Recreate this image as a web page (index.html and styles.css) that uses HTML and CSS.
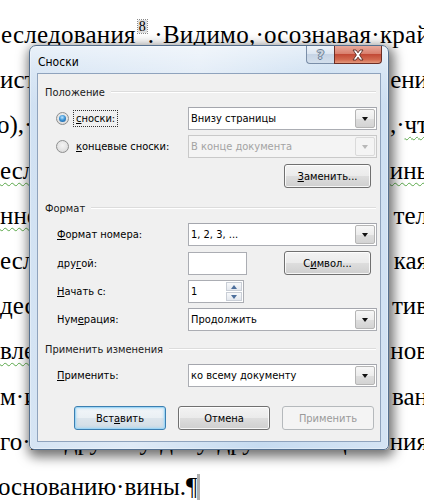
FILE: index.html
```html
<!DOCTYPE html>
<html lang="ru">
<head>
<meta charset="utf-8">
<title>Сноски</title>
<link rel="stylesheet" href="styles.css">
</head>
<body>
<div class="doc">
  <div class="line first">еследования<span class="fnref">8</span>.·Видимо,·осознавая·край</div>
  <div class="line"><span class="l">ист</span><span class="r">ени</span></div>
  <div class="line"><span class="l sh">о),·</span><span class="r">,·<span class="gw">чт</span></span></div>
  <div class="line"><span class="l"><span class="gw">есл</span></span><span class="r"><span class="gw">инь</span></span></div>
  <div class="line"><span class="l"><span class="gw">нне</span></span><span class="r">тел</span></div>
  <div class="line"><span class="l">есл</span><span class="r">кая</span></div>
  <div class="line"><span class="l">дест</span><span class="r">тив</span></div>
  <div class="line"><span class="l"><span class="gw">вле</span></span><span class="r">нов</span></div>
  <div class="line"><span class="l">м·и</span><span class="r">ван</span></div>
  <div class="line"><span class="l">го·по·другому·делу·другого·лица</span><span class="r">ния</span></div>
  <div class="line last">основанию·вины.<span class="pil">¶</span><span class="cursor"></span></div>
</div>

<div class="dialog">
  <div class="titlebar">
    <span class="title">Сноски</span>
    <div class="caption">
      <span class="cap-help">?</span>
      <span class="cap-close">
        <svg width="14" height="12" viewBox="0 0 14 12"><path d="M2 1 L5 1 L7 3.8 L9 1 L12 1 L8.6 6 L12 11 L9 11 L7 8.2 L5 11 L2 11 L5.4 6 Z" fill="#fff" stroke="#5a2a22" stroke-width="0.9" stroke-linejoin="round"/></svg>
      </span>
    </div>
  </div>
  <div class="panel">
    <div class="group">Положение</div>

    <div class="row row-a">
      <div class="radio"><span class="rb on"></span><span class="focus"><u>с</u>носки:</span></div>
      <div class="combo"><span class="val">Внизу страницы</span><span class="drop"></span></div>
    </div>
    <div class="row row-b">
      <div class="radio"><span class="rb"></span><span class="rlabel"><u>к</u>онцевые сноски:</span></div>
      <div class="combo off"><span class="val">В конце документа</span><span class="drop"></span></div>
    </div>
    <div class="row row-c">
      <div></div>
      <div class="ctl-right"><span class="btn"><u>З</u>аменить...</span></div>
    </div>

    <div class="group g2">Формат</div>

    <div class="row row-d">
      <div class="lbl"><u>Ф</u>ормат номера:</div>
      <div class="combo"><span class="val">1, 2, 3, ...</span><span class="drop"></span></div>
    </div>
    <div class="row row-e">
      <div class="lbl">дру<u>г</u>ой:</div>
      <div class="ctl-split">
        <span class="text-box"></span>
        <span class="btn">С<u>и</u>мвол...</span>
      </div>
    </div>
    <div class="row row-f">
      <div class="lbl"><u>Н</u>ачать с:</div>
      <div class="ctl-left">
        <div class="spin"><span class="val">1</span><span class="spin-btns"><span class="up"></span><span class="down"></span></span></div>
      </div>
    </div>
    <div class="row row-g">
      <div class="lbl">Нум<u>е</u>рация:</div>
      <div class="combo"><span class="val">Продолжить</span><span class="drop"></span></div>
    </div>

    <div class="group g3">Применить изменения</div>

    <div class="row row-h">
      <div class="lbl"><u>П</u>рименить:</div>
      <div class="combo"><span class="val">ко всему документу</span><span class="drop"></span></div>
    </div>

    <div class="actions">
      <span class="btn big default">Вст<u>а</u>вить</span>
      <span class="btn big">Отмена</span>
      <span class="btn big disabled">Применить</span>
    </div>
  </div>
</div>
</body>
</html>
```

FILE: styles.css
```css
html, body {
  margin: 0;
  padding: 0;
  background: #fff;
  overflow: hidden;
  width: 424px;
  height: 500px;
}

/* ---------- document behind the dialog ---------- */
.doc {
  position: relative;
  padding-top: 12px;
  font-family: "Liberation Serif", "Times New Roman", serif;
  font-size: 25px;
  line-height: 45.2px;
  color: #000;
}
.line {
  display: flex;
  justify-content: space-between;
  white-space: nowrap;
  overflow: hidden;
  width: 424px;
}
.line.first, .line.last {
  display: block;
}
.line.first { padding-left: 1px; width: 423px; letter-spacing: 0.25px; }
.line.last { margin-left: -2px; width: 426px; }
.l.sh { margin-left: -3px; }
.r { margin-right: -4px; }
.gw {
  text-decoration: underline wavy #5aa84a;
  text-decoration-thickness: 1px;
  text-underline-offset: 3px;
}
.fnref {
  display: inline-block;
  font-size: 14px;
  line-height: 13px;
  vertical-align: 12px;
  padding: 0 1px;
  background: #dedede;
  outline: 1px dotted #8a8a8a;
  margin: 0 1px 0 2px;
  letter-spacing: 0;
}
.cursor {
  display: inline-block;
  width: 3px;
  height: 26px;
  background: #b0b0b0;
  vertical-align: -5px;
  margin-left: 0;
}

/* ---------- dialog window ---------- */
.dialog {
  position: absolute;
  left: 29px;
  top: 45px;
  width: 360px;
  height: 405px;
  box-sizing: border-box;
  border: 1px solid #55708f;
  border-radius: 7px 7px 5px 5px;
  background:
    linear-gradient(180deg, rgba(255,255,255,0.55) 0px, rgba(255,255,255,0.2) 28px, rgba(255,255,255,0) 60px),
    linear-gradient(100deg, #cfe0f2 0%, #dfeaf6 40%, #c6dbf0 70%, #d5e4f4 100%);
  box-shadow: 0 0 0 1px rgba(255,255,255,0.35) inset, 2px 4px 12px 3px rgba(0,0,0,0.55);
  padding: 0 7px 7px 7px;
  display: flex;
  flex-direction: column;
  font-family: "DejaVu Sans Condensed", "DejaVu Sans", sans-serif;
  font-size: 11px;
  color: #000;
}
.titlebar {
  height: 27px;
  display: flex;
  align-items: flex-start;
  justify-content: space-between;
  flex-shrink: 0;
}
.title {
  font-size: 12px;
  margin-top: 9px;
  margin-left: 1px;
  color: #000;
}
.caption {
  display: flex;
  margin-right: -1px;
}
.cap-help, .cap-close {
  height: 18px;
  box-sizing: border-box;
  display: flex;
  align-items: center;
  justify-content: center;
}
.cap-help {
  width: 28px;
  border: 1px solid #7a8ea8;
  border-top: none;
  border-right: none;
  border-radius: 0 0 0 4px;
  background: linear-gradient(180deg, #eef3f9 0%, #dde7f2 45%, #c6d4e5 50%, #d3dfec 100%);
  color: #c9d3de;
  font-family: "DejaVu Sans", sans-serif;
  font-weight: bold;
  font-size: 13px;
  text-shadow: -1px 0 0 #6d7f95, 1px 0 0 #6d7f95, 0 -1px 0 #6d7f95, 0 1px 0 #6d7f95;
}
.cap-close {
  width: 48px;
  border: 1px solid #6b2e25;
  border-top: none;
  border-radius: 0 0 4px 0;
  background: linear-gradient(180deg, #e9a99b 0%, #d9806e 45%, #c24a36 50%, #d2694f 80%, #e49a7d 100%);
}

.panel {
  flex: 1;
  box-sizing: border-box;
  border: 1px solid #8fa3bd;
  background: #f0f0f0;
  padding: 10px 4px 0 7px;
  display: flex;
  flex-direction: column;
}

.group {
  height: 16px;
  display: flex;
  align-items: center;
  gap: 6px;
  color: #1a1a1a;
}
.group::after {
  content: "";
  flex: 1;
  height: 1px;
  background: #dcdcdc;
  border-bottom: 1px solid #fff;
}
.g2 { margin-top: 12px; }
.g3 { margin-top: 10px; }

.row {
  display: grid;
  grid-template-columns: 132px 189px;
  margin-left: 11px;
  align-items: center;
  height: 23px;
}
.row-a { margin-top: 7px; }
.row-b { margin-top: 5px; }
.row-c { margin-top: 6px; height: 24px; }
.row-d { margin-top: 7px; }
.row-e { margin-top: 5px; height: 24px; }
.row-f { margin-top: 5px; }
.row-g { margin-top: 5px; }
.row-h { margin-top: 7px; }

.lbl { padding-left: 1px; }

u { text-decoration: underline; text-underline-offset: 1px; }

.radio {
  display: flex;
  align-items: center;
  gap: 6px;
}
.rb {
  width: 13px;
  height: 13px;
  box-sizing: border-box;
  border-radius: 50%;
  border: 1px solid #8e8f8f;
  background: radial-gradient(circle at 50% 40%, #f4f4f4 0%, #e2e2e2 60%, #cfcfcf 100%);
  display: flex;
  align-items: center;
  justify-content: center;
}
.rb.on::after {
  content: "";
  width: 7px;
  height: 7px;
  border-radius: 50%;
  background: radial-gradient(circle at 45% 35%, #bfe6ff 0%, #3e95d6 45%, #0f4f92 100%);
}
.focus {
  outline: 1px dotted #333;
  outline-offset: 1px;
  padding: 0 1px;
}
.rlabel { padding-left: 1px; }

.combo {
  height: 23px;
  box-sizing: border-box;
  border: 1px solid #abadb3;
  border-top-color: #a4a6ad;
  background: #fff;
  display: flex;
  align-items: stretch;
}
.combo .val {
  flex: 1;
  display: flex;
  align-items: center;
  padding-left: 2px;
}
.drop {
  width: 20px;
  margin: 1px;
  box-sizing: border-box;
  border: 1px solid #b5b5b5;
  border-radius: 2px;
  background: linear-gradient(180deg, #f7f7f7 0%, #ececec 50%, #dedede 51%, #d3d3d3 100%);
  display: flex;
  align-items: center;
  justify-content: center;
}
.drop::before {
  content: "";
  width: 0;
  height: 0;
  border-left: 3.5px solid transparent;
  border-right: 3.5px solid transparent;
  border-top: 4px solid #111;
}
.combo.off {
  background: #f4f4f4;
  border-color: #c9c9c9;
  color: #a3a3a3;
}
.combo.off .drop {
  border-color: #dadada;
  background: #f4f4f4;
}
.combo.off .drop::before { border-top-color: #b8b8b8; }

.ctl-right {
  display: flex;
  justify-content: flex-end;
  padding-right: 6px;
}
.ctl-split {
  display: flex;
  justify-content: space-between;
  align-items: center;
  padding-right: 6px;
}
.ctl-left { display: flex; }

.text-box {
  width: 59px;
  height: 23px;
  box-sizing: border-box;
  border: 1px solid #abadb3;
  background: #fff;
}

.spin {
  width: 56px;
  height: 23px;
  box-sizing: border-box;
  border: 1px solid #abadb3;
  background: #fff;
  display: flex;
}
.spin .val {
  flex: 1;
  display: flex;
  align-items: center;
  padding-left: 2px;
}
.spin-btns {
  width: 16px;
  display: flex;
  flex-direction: column;
  margin: 1px;
  gap: 1px;
}
.spin-btns span {
  flex: 1;
  box-sizing: border-box;
  border: 1px solid #c9ced6;
  background: linear-gradient(180deg, #f8f9fb, #e4e8ee);
  display: flex;
  align-items: center;
  justify-content: center;
}
.spin-btns .up::before {
  content: "";
  border-left: 3.5px solid transparent;
  border-right: 3.5px solid transparent;
  border-bottom: 4px solid #4d6f9c;
}
.spin-btns .down::before {
  content: "";
  border-left: 3.5px solid transparent;
  border-right: 3.5px solid transparent;
  border-top: 4px solid #4d6f9c;
}

.btn {
  width: 87px;
  height: 24px;
  box-sizing: border-box;
  border: 1px solid #707070;
  border-radius: 3px;
  background: linear-gradient(180deg, #f3f3f3 0%, #ebebeb 48%, #dddddd 52%, #cfcfcf 100%);
  box-shadow: inset 0 0 0 1px rgba(255,255,255,0.8);
  display: flex;
  align-items: center;
  justify-content: center;
  color: #000;
}
.btn.big { width: 92px; }
.btn.default {
  border-color: #3c7fb1;
  box-shadow: inset 0 0 0 1px #9fd6f5, inset 0 0 2px 2px rgba(160,214,245,0.5);
  background: linear-gradient(180deg, #f2f6f9 0%, #eaf0f4 48%, #dce5ec 52%, #d1dde5 100%);
}
.btn.disabled {
  border-color: #b5b9bc;
  background: #f4f4f4;
  box-shadow: none;
  color: #9a9a9a;
}

.actions {
  margin-top: 19px;
  display: flex;
  justify-content: flex-end;
  gap: 12px;
  padding-right: 2px;
}
```
